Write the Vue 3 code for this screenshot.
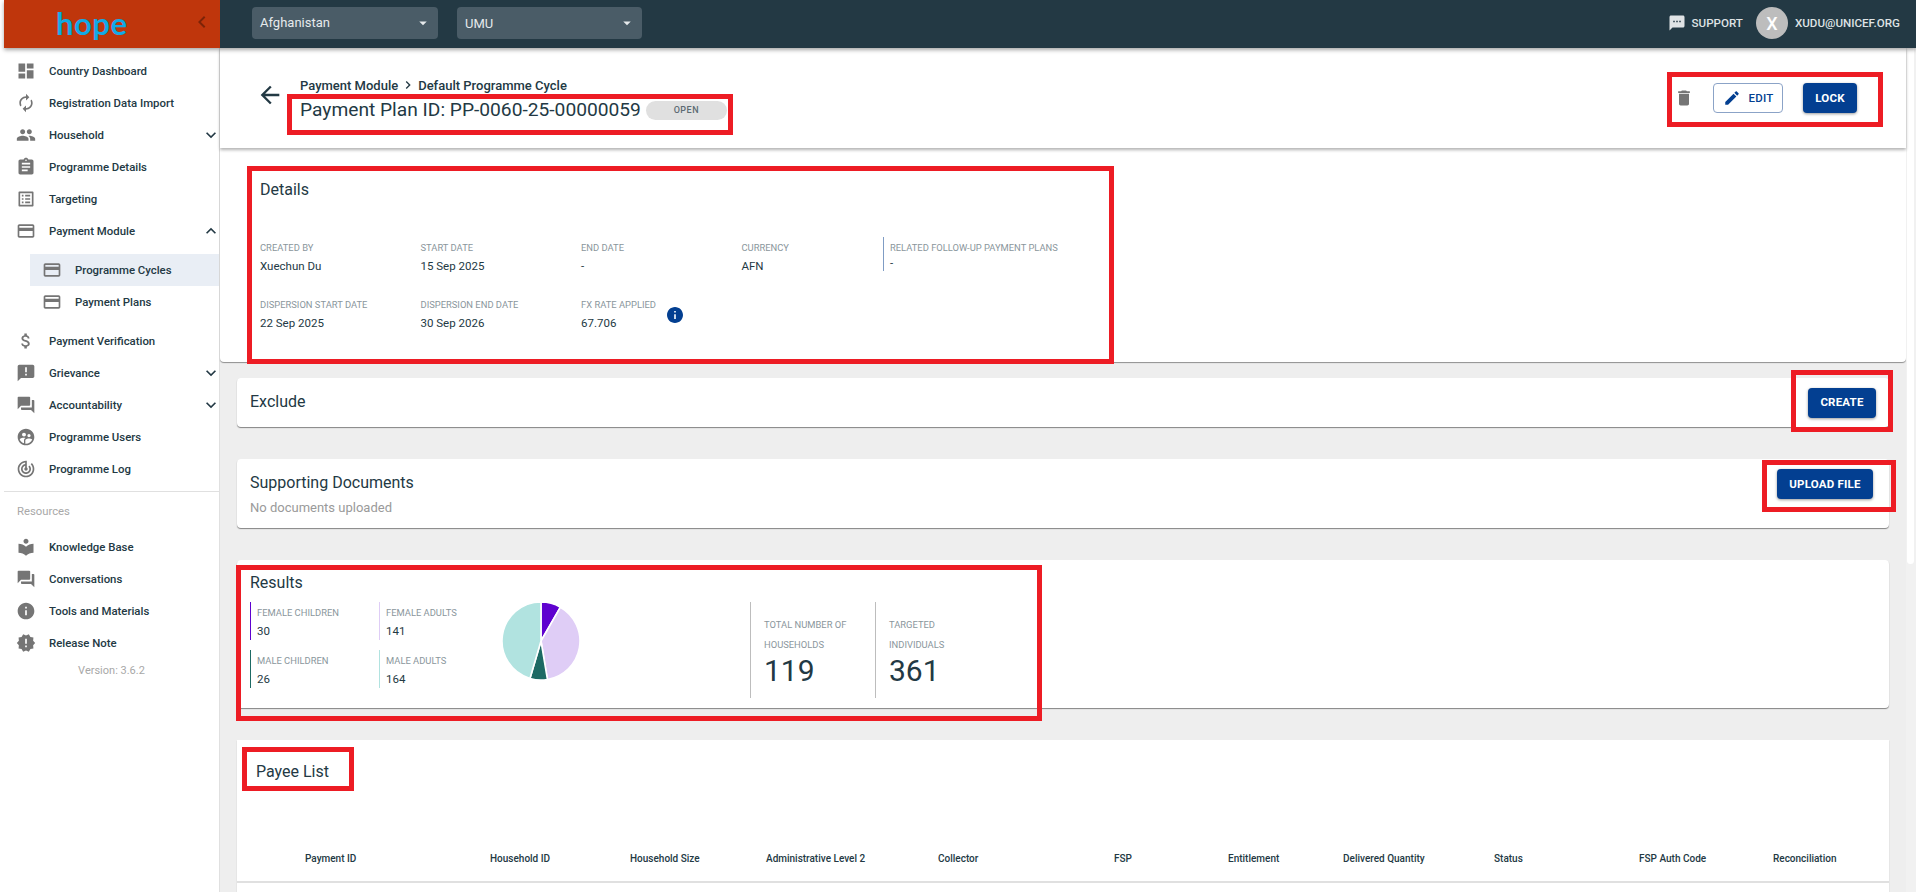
<script setup>
import { computed } from "vue";

const icons = {
  dashboard: "M3 13h8V3H3v10zm0 8h8v-6H3v6zm10 0h8V11h-8v10zm0-18v6h8V3h-8z",
  renew: "M12 6v3l4-4-4-4v3c-4.42 0-8 3.58-8 8 0 1.57.46 3.03 1.24 4.26L6.7 14.8c-.45-.83-.7-1.79-.7-2.8 0-3.31 2.69-6 6-6zm6.76 1.74L17.3 9.2c.44.84.7 1.79.7 2.8 0 3.31-2.69 6-6 6v-3l-4 4 4 4v-3c4.42 0 8-3.58 8-8 0-1.57-.46-3.03-1.24-4.26z",
  people: "M16 11c1.66 0 2.99-1.34 2.99-3S17.66 5 16 5c-1.66 0-3 1.34-3 3s1.34 3 3 3zm-8 0c1.66 0 2.99-1.34 2.99-3S9.66 5 8 5C6.34 5 5 6.34 5 8s1.34 3 3 3zm0 2c-2.33 0-7 1.17-7 3.5V19h14v-2.5c0-2.33-4.67-3.5-7-3.5zm8 0c-.29 0-.62.02-.97.05 1.16.84 1.97 1.97 1.97 3.45V19h6v-2.5c0-2.33-4.67-3.5-7-3.5z",
  assignment: "M19 3h-4.18C14.4 1.84 13.3 1 12 1c-1.3 0-2.4.84-2.82 2H5c-1.1 0-2 .9-2 2v14c0 1.1.9 2 2 2h14c1.1 0 2-.9 2-2V5c0-1.1-.9-2-2-2zm-7 0c.55 0 1 .45 1 1s-.45 1-1 1-1-.45-1-1 .45-1 1-1zm2 14H7v-2h7v2zm3-4H7v-2h10v2zm0-4H7V7h10v2z",
  listAlt: "M19 5v14H5V5h14m1.1-2H3.9c-.5 0-.9.4-.9.9v16.2c0 .4.4.9.9.9h16.2c.4 0 .9-.5.9-.9V3.9c0-.5-.5-.9-.9-.9zM11 7h6v2h-6V7zm0 4h6v2h-6v-2zm0 4h6v2h-6zM7 7h2v2H7zm0 4h2v2H7zm0 4h2v2H7z",
  card: "M20 4H4c-1.11 0-1.99.89-1.99 2L2 18c0 1.11.89 2 2 2h16c1.11 0 2-.89 2-2V6c0-1.11-.89-2-2-2zm0 14H4v-6h16v6zm0-10H4V6h16v2z",
  money: "M11.8 10.9c-2.27-.59-3-1.2-3-2.15 0-1.09 1.01-1.85 2.7-1.85 1.78 0 2.44.85 2.5 2.1h2.21c-.07-1.72-1.12-3.3-3.21-3.81V3h-3v2.16c-1.94.42-3.5 1.68-3.5 3.61 0 2.31 1.91 3.46 4.7 4.13 2.5.6 3 1.48 3 2.41 0 .69-.49 1.79-2.7 1.79-2.06 0-2.87-.92-2.98-2.1h-2.2c.12 2.19 1.76 3.42 3.68 3.83V21h3v-2.15c1.95-.37 3.5-1.5 3.5-3.55 0-2.84-2.43-3.81-4.7-4.4z",
  announcement: "M20 2H4c-1.1 0-1.99.9-1.99 2L2 22l4-4h14c1.1 0 2-.9 2-2V4c0-1.1-.9-2-2-2zm-7 9h-2V5h2v6zm0 4h-2v-2h2v2z",
  forum: "M21 6h-2v9H6v2c0 .55.45 1 1 1h11l4 4V7c0-.55-.45-1-1-1zm-4 6V3c0-.55-.45-1-1-1H3c-.55 0-1 .45-1 1v14l4-4h10c.55 0 1-.45 1-1z",
  users: "M11.99 2c-5.52 0-10 4.48-10 10s4.48 10 10 10 10-4.48 10-10-4.48-10-10-10zm3.61 6.34c1.07 0 1.93.86 1.93 1.93 0 1.07-.86 1.93-1.93 1.93-1.07 0-1.93-.86-1.93-1.93-.01-1.07.86-1.93 1.93-1.93zm-6-1.58c1.3 0 2.36 1.06 2.36 2.36 0 1.3-1.06 2.36-2.36 2.36s-2.36-1.06-2.36-2.36c0-1.31 1.05-2.36 2.36-2.36zm0 9.13v3.75c-2.4-.75-4.3-2.6-5.14-4.96 1.05-1.12 3.67-1.69 5.14-1.69.53 0 1.2.08 1.9.22-1.64.87-1.9 2.02-1.9 2.68zM11.99 20c-.27 0-.53-.01-.79-.04v-4.07c0-1.42 2.94-2.13 4.4-2.13 1.07 0 2.92.39 3.84 1.15-1.17 2.97-4.06 5.09-7.45 5.09z",
  track: "M19.07 4.93l-1.41 1.41C19.1 7.79 20 9.79 20 12c0 4.42-3.58 8-8 8s-8-3.58-8-8c0-4.08 3.05-7.44 7-7.93v2.02C8.16 6.57 6 9.03 6 12c0 3.31 2.69 6 6 6s6-2.69 6-6c0-1.66-.67-3.16-1.76-4.24l-1.41 1.41C15.55 9.9 16 10.9 16 12c0 2.21-1.79 4-4 4s-4-1.79-4-4c0-1.86 1.28-3.41 3-3.86v2.14c-.6.35-1 .98-1 1.72 0 1.1.9 2 2 2s2-.9 2-2c0-.74-.4-1.38-1-1.72V2h-1C6.48 2 2 6.48 2 12s4.48 10 10 10 10-4.48 10-10c0-2.76-1.12-5.26-2.93-7.07z",
  library: "M12 11.55C9.64 9.35 6.48 8 3 8v11c3.48 0 6.64 1.35 9 3.55 2.36-2.19 5.52-3.55 9-3.55V8c-3.48 0-6.64 1.35-9 3.55zM12 8c1.66 0 3-1.34 3-3s-1.34-3-3-3-3 1.34-3 3 1.34 3 3 3z",
  info: "M12 2C6.48 2 2 6.48 2 12s4.48 10 10 10 10-4.48 10-10S17.52 2 12 2zm1 15h-2v-6h2v6zm0-8h-2V7h2v2z",
  release: "M23 12l-2.44-2.78.34-3.68-3.61-.82-1.89-3.18L12 3 8.6 1.54 6.71 4.72l-3.61.81.34 3.68L1 12l2.44 2.78-.34 3.69 3.61.82 1.89 3.18L12 21l3.4 1.46 1.89-3.18 3.61-.82-.34-3.68L23 12zm-10 5h-2v-2h2v2zm0-4h-2V7h2v6z",
  more: "M16.59 8.59L12 13.17 7.41 8.59 6 10l6 6 6-6z",
  less: "M12 8l-6 6 1.41 1.41L12 10.83l4.59 4.58L18 14z",
  left: "M15.41 7.41L14 6l-6 6 6 6 1.41-1.41L10.83 12z",
  right: "M10 6L8.59 7.41 13.17 12l-4.58 4.59L10 18l6-6z",
  back: "M20 11H7.83l5.59-5.59L12 4l-8 8 8 8 1.41-1.41L7.83 13H20v-2z",
  trash: "M6 19c0 1.1.9 2 2 2h8c1.1 0 2-.9 2-2V7H6v12zM19 4h-3.5l-1-1h-5l-1 1H5v2h14V4z",
  edit: "M3 17.25V21h3.75L17.81 9.94l-3.75-3.75L3 17.25zM20.71 7.04c.39-.39.39-1.02 0-1.41l-2.34-2.34c-.39-.39-1.02-.39-1.41 0l-1.83 1.83 3.75 3.75 1.83-1.83z",
  sms: "M20 2H4c-1.1 0-1.99.9-1.99 2L2 22l4-4h14c1.1 0 2-.9 2-2V4c0-1.1-.9-2-2-2zM9 11H7V9h2v2zm4 0h-2V9h2v2zm4 0h-2V9h2v2z",
  drop: "M7 10l5 5 5-5z"
};

const menu = [
  { name: "Country Dashboard", icon: "dashboard" },
  { name: "Registration Data Import", icon: "renew" },
  { name: "Household", icon: "people", arrow: "more" },
  { name: "Programme Details", icon: "assignment" },
  { name: "Targeting", icon: "listAlt" },
  { name: "Payment Module", icon: "card", arrow: "less" }
];
const subMenu = [
  { name: "Programme Cycles", icon: "card", active: true },
  { name: "Payment Plans", icon: "card" }
];
const menu2 = [
  { name: "Payment Verification", icon: "money" },
  { name: "Grievance", icon: "announcement", arrow: "more" },
  { name: "Accountability", icon: "forum", arrow: "more" },
  { name: "Programme Users", icon: "users" },
  { name: "Programme Log", icon: "track" }
];
const resources = [
  { name: "Knowledge Base", icon: "library" },
  { name: "Conversations", icon: "forum" },
  { name: "Tools and Materials", icon: "info" },
  { name: "Release Note", icon: "release" }
];

const details = [
  { label: "Created by", value: "Xuechun Du" },
  { label: "Start date", value: "15 Sep 2025" },
  { label: "End date", value: "-" },
  { label: "Currency", value: "AFN" }
];
const details2 = [
  { label: "Dispersion start date", value: "22 Sep 2025" },
  { label: "Dispersion end date", value: "30 Sep 2026" }
];

const results = [
  { label: "Female children", value: 30, color: "#5f02cf" },
  { label: "Female adults", value: 141, color: "#dfcdf6" },
  { label: "Male children", value: 26, color: "#1d6a64" },
  { label: "Male adults", value: 164, color: "#b1e3e0" }
];

// order round the pie is the same as the results list
const slices = computed(() => {
  const total = results.reduce((sum, r) => sum + r.value, 0);
  let angle = -Math.PI / 2;
  return results.map((r) => {
    const next = angle + (r.value / total) * Math.PI * 2;
    const big = next - angle > Math.PI ? 1 : 0;
    const x1 = 40 + 39 * Math.cos(angle);
    const y1 = 40 + 39 * Math.sin(angle);
    const x2 = 40 + 39 * Math.cos(next);
    const y2 = 40 + 39 * Math.sin(next);
    angle = next;
    return { color: r.color, d: `M40 40L${x1} ${y1}A39 39 0 ${big} 1 ${x2} ${y2}Z` };
  });
});

const columns = [
  "Payment ID", "Household ID", "Household Size", "Administrative Level 2", "Collector", "FSP",
  "Entitlement", "Delivered Quantity", "Status", "FSP Auth Code", "Reconciliation"
];

// red review marks drawn over the page
const marks = [
  { x: 287, y: 94, w: 446, h: 41 },
  { x: 1667, y: 72, w: 216, h: 55 },
  { x: 247, y: 166, w: 867, h: 198 },
  { x: 1791, y: 370, w: 102, h: 62 },
  { x: 1762, y: 460, w: 134, h: 52 },
  { x: 236, y: 565, w: 806, h: 156 },
  { x: 242, y: 747, w: 112, h: 44 }
];
</script>

<template>
  <div class="shell">
    <header class="topbar">
      <div class="brand">
        <span class="logo">hope</span>
        <svg class="collapse" viewBox="0 0 24 24"><path :d="icons.left" /></svg>
      </div>
      <div class="select select-first">
        <span>Afghanistan</span>
        <svg viewBox="0 0 24 24"><path :d="icons.drop" /></svg>
      </div>
      <div class="select">
        <span>UMU</span>
        <svg viewBox="0 0 24 24"><path :d="icons.drop" /></svg>
      </div>
      <div class="top-right">
        <svg class="support-icon" viewBox="0 0 24 24"><path :d="icons.sms" /></svg>
        <span class="top-text">SUPPORT</span>
        <span class="avatar">X</span>
        <span class="top-text">XUDU@UNICEF.ORG</span>
      </div>
    </header>

    <div class="body">
      <aside class="sidebar">
        <div class="nav-top">
          <div v-for="item in menu" :key="item.name" class="nav-item">
            <svg class="nav-icon" viewBox="0 0 24 24"><path :d="icons[item.icon]" /></svg>
            <span>{{ item.name }}</span>
            <svg v-if="item.arrow" class="nav-arrow" viewBox="0 0 24 24"><path :d="icons[item.arrow]" /></svg>
          </div>
          <div class="sub-menu">
            <div v-for="item in subMenu" :key="item.name" class="nav-item" :class="{ active: item.active }">
              <svg class="nav-icon" viewBox="0 0 24 24"><path :d="icons[item.icon]" /></svg>
              <span>{{ item.name }}</span>
            </div>
          </div>
          <div v-for="item in menu2" :key="item.name" class="nav-item">
            <svg class="nav-icon" viewBox="0 0 24 24"><path :d="icons[item.icon]" /></svg>
            <span>{{ item.name }}</span>
            <svg v-if="item.arrow" class="nav-arrow" viewBox="0 0 24 24"><path :d="icons[item.arrow]" /></svg>
          </div>
        </div>
        <div class="nav-title">Resources</div>
        <div v-for="item in resources" :key="item.name" class="nav-item">
          <svg class="nav-icon" viewBox="0 0 24 24"><path :d="icons[item.icon]" /></svg>
          <span>{{ item.name }}</span>
        </div>
        <div class="version">Version: 3.6.2</div>
      </aside>

      <main class="main">
        <section class="page-head">
          <svg class="back" viewBox="0 0 24 24"><path :d="icons.back" /></svg>
          <div class="head-text">
            <div class="crumbs">
              <span>Payment Module</span>
              <svg viewBox="0 0 24 24"><path :d="icons.right" /></svg>
              <span>Default Programme Cycle</span>
            </div>
            <div class="title-row">
              <h1>Payment Plan ID: PP-0060-25-00000059</h1>
              <span class="chip">OPEN</span>
            </div>
          </div>
          <div class="actions">
            <svg class="trash" viewBox="0 0 24 24"><path :d="icons.trash" /></svg>
            <button class="btn btn-outline">
              <svg viewBox="0 0 24 24"><path :d="icons.edit" /></svg>
              EDIT
            </button>
            <button class="btn btn-solid btn-lock">LOCK</button>
          </div>
        </section>

        <section class="details">
          <h2>Details</h2>
          <div class="details-grid">
            <div v-for="d in details" :key="d.label" class="field">
              <div class="label">{{ d.label }}</div>
              <div class="value">{{ d.value }}</div>
            </div>
            <div class="field field-related">
              <div class="label">Related Follow-Up Payment Plans</div>
              <div class="value">-</div>
            </div>
            <div v-for="d in details2" :key="d.label" class="field">
              <div class="label">{{ d.label }}</div>
              <div class="value">{{ d.value }}</div>
            </div>
            <div class="field-fx">
              <div class="field">
                <div class="label">FX rate applied</div>
                <div class="value">67.706</div>
              </div>
              <svg class="fx-info" viewBox="2 2 20 20"><path :d="icons.info" /></svg>
            </div>
          </div>
        </section>

        <section class="card card-exclude">
          <h2>Exclude</h2>
          <button class="btn btn-solid btn-create">CREATE</button>
        </section>

        <section class="card card-docs">
          <div class="docs-text">
            <h2>Supporting Documents</h2>
            <p>No documents uploaded</p>
          </div>
          <button class="btn btn-solid btn-upload">UPLOAD FILE</button>
        </section>

        <section class="card card-results">
          <h2>Results</h2>
          <div class="results-row">
            <div class="stat-grid">
              <div v-for="r in results" :key="r.label" class="stat" :style="{ borderLeftColor: r.color }">
                <div class="label">{{ r.label }}</div>
                <div class="value">{{ r.value }}</div>
              </div>
            </div>
            <svg class="pie" viewBox="0 0 80 80">
              <path v-for="s in slices" :key="s.color" :d="s.d" :fill="s.color" stroke="#fff" stroke-width="1.6" />
            </svg>
            <div class="big-stat big-first">
              <div class="label big-label">Total number of households</div>
              <div class="big-number">119</div>
            </div>
            <div class="big-stat">
              <div class="label big-label">Targeted individuals</div>
              <div class="big-number">361</div>
            </div>
          </div>
        </section>

        <section class="card-payee">
          <h2>Payee List</h2>
          <div class="table-head">
            <div v-for="c in columns" :key="c">{{ c }}</div>
          </div>
        </section>
      </main>
    </div>

    <div class="scroll-track"><div class="scroll-thumb"></div></div>

    <div
      v-for="(m, i) in marks"
      :key="i"
      class="mark"
      :style="{ left: m.x + 'px', top: m.y + 'px', width: m.w + 'px', height: m.h + 'px' }"
    ></div>
  </div>
</template>

<style>
html,
body {
  margin: 0;
  overflow: hidden;
  background: #fff;
}
</style>

<style scoped>
.shell {
  position: relative;
  width: 1916px;
  height: 892px;
  overflow: hidden;
  padding-left: 4px;
  box-sizing: border-box;
  font-family: Roboto, "Liberation Sans", sans-serif;
  color: #233944;
  background: #fff;
}

h1,
h2,
p {
  margin: 0;
  font-weight: 400;
}

.topbar {
  position: relative;
  z-index: 3;
  display: flex;
  align-items: center;
  height: 48px;
  background: #233944;
  box-shadow: 0 2px 4px rgba(0, 0, 0, 0.35);
}

.brand {
  position: relative;
  display: flex;
  align-items: center;
  width: 216px;
  height: 48px;
  padding: 0 0 3px 52px;
  box-sizing: border-box;
  background: #bf360c;
}

.logo {
  font-family: Lato, sans-serif;
  font-size: 31px;
  font-weight: 700;
  line-height: 40px;
  letter-spacing: 0.5px;
  color: #12a9e6;
}

.collapse {
  position: absolute;
  right: 6px;
  top: 10px;
  width: 24px;
  height: 24px;
  fill: rgba(0, 0, 0, 0.35);
}

.select {
  display: flex;
  align-items: center;
  justify-content: space-between;
  width: 185px;
  height: 32px;
  margin-top: -2px;
  margin-left: 19px;
  padding: 0 6px 0 8px;
  box-sizing: border-box;
  border-radius: 4px;
  background: #4a5c67;
  font-size: 13px;
  color: #e6eaec;
}

.select-first {
  width: 186px;
  margin-left: 32px;
}

.select-first span {
  margin-bottom: 2px;
}

.select svg {
  width: 18px;
  height: 18px;
  fill: #e6eaec;
}

.top-right {
  display: flex;
  align-items: center;
  margin-left: auto;
  margin-top: -2px;
  padding-right: 16px;
}

.support-icon {
  width: 18px;
  height: 18px;
  margin-right: 6px;
  fill: #dfe3e5;
}

.top-text {
  font-size: 11.6px;
  font-weight: 500;
  color: #dfe3e5;
}

.avatar {
  display: flex;
  align-items: center;
  justify-content: center;
  width: 32px;
  height: 32px;
  margin: 0 7px 0 13px;
  border-radius: 50%;
  background: #bdbdbd;
  color: #fff;
  font-size: 18px;
  font-weight: 500;
}

.body {
  display: flex;
  height: 844px;
}

.sidebar {
  flex: none;
  width: 216px;
  padding-top: 7px;
  box-sizing: border-box;
  border-right: 1px solid #e0e0e0;
  background: #fff;
}

.nav-top {
  padding-bottom: 6px;
  border-bottom: 1px solid #e0e0e0;
}

.nav-item {
  display: flex;
  align-items: center;
  height: 32px;
  padding-left: 12px;
  font-size: 11.4px;
  font-weight: 500;
  color: #233944;
}

.nav-item span {
  padding-bottom: 1px;
}

.nav-icon {
  flex: none;
  width: 20px;
  height: 20px;
  margin-right: 13px;
  fill: #757575;
}

.nav-arrow {
  width: 20px;
  height: 20px;
  margin-left: auto;
  margin-right: -2px;
  fill: #233944;
}

.sub-menu {
  padding: 7px 0 7px 26px;
}

.active {
  background: #e9eef5;
}

.nav-title {
  margin: 12px 0 11px 13px;
  font-size: 11.3px;
  line-height: 16px;
  color: #a8a8a8;
}

.version {
  margin-top: 4px;
  font-size: 11px;
  line-height: 16px;
  text-align: center;
  color: #a8a8a8;
}

.main {
  flex: none;
  width: 1686px;
  background: #eee;
}

.page-head {
  position: relative;
  z-index: 2;
  display: flex;
  align-items: flex-start;
  height: 100px;
  padding: 29px 49px 0 36px;
  box-sizing: border-box;
  background: #fff;
  box-shadow: 0 2px 3px rgba(0, 0, 0, 0.3);
}

.back {
  flex: none;
  width: 28px;
  height: 28px;
  margin-top: 4px;
  margin-right: 16px;
  fill: #233944;
}

.crumbs {
  display: flex;
  align-items: center;
  height: 16px;
  font-size: 13px;
  font-weight: 500;
  color: #233944;
}

.crumbs svg {
  width: 16px;
  height: 16px;
  margin: 0 2px;
  fill: #233944;
}

.title-row {
  display: flex;
  align-items: center;
  gap: 7px;
  margin-top: 2px;
}

h1 {
  font-size: 19.2px;
  line-height: 30px;
  color: #233944;
}

.chip {
  width: 81px;
  height: 19px;
  margin-left: -2px;
  border-radius: 10px;
  background: #e0e0e0;
  text-align: center;
  font-size: 9px;
  font-weight: 500;
  line-height: 19px;
  letter-spacing: 0.5px;
  color: #5c6b73;
}

.actions {
  display: flex;
  align-items: center;
  margin-left: auto;
  margin-top: 6px;
}

.trash {
  width: 20px;
  height: 20px;
  margin-right: 19px;
  fill: #757575;
}

.btn {
  display: flex;
  align-items: center;
  justify-content: center;
  height: 30px;
  padding: 0;
  box-sizing: border-box;
  border-radius: 4px;
  font-family: inherit;
  font-size: 11.5px;
  font-weight: 500;
  letter-spacing: 0.2px;
}

.btn-outline {
  width: 70px;
  gap: 8px;
  border: 1px solid #8ba3c7;
  background: #fff;
  color: #033f91;
}

.btn-outline svg {
  width: 18px;
  height: 18px;
  fill: #033f91;
}

.btn-solid {
  border: none;
  background: #033f91;
  color: #fff;
  font-weight: 700;
  box-shadow: 0 1px 3px rgba(0, 0, 0, 0.4);
}

.btn-lock {
  width: 54px;
  margin-left: 20px;
}

.btn-create {
  width: 68px;
  margin-top: 3px;
  padding-bottom: 3px;
}

.btn-upload {
  width: 96px;
  margin-top: 10px;
}

.details {
  height: 214px;
  padding: 31px 0 0 40px;
  box-sizing: border-box;
  border-radius: 0 0 4px 4px;
  background: #fff;
  box-shadow: 0 1px 1px rgba(0, 0, 0, 0.4);
}

h2 {
  font-size: 16px;
  line-height: 22px;
  color: #233944;
}

.details-grid {
  display: grid;
  grid-template-columns: 160.5px 160.5px 160.5px 141.5px auto;
  grid-auto-rows: 36px;
  row-gap: 21px;
  margin-top: 39px;
  width: 860px;
}

.label {
  font-size: 9.4px;
  line-height: 16px;
  text-transform: uppercase;
  color: #8a969c;
}

.value {
  font-size: 11.5px;
  line-height: 20px;
  color: #233944;
}

.field-related {
  height: 34px;
  margin-top: -3px;
  padding: 3px 0 0 6px;
  box-sizing: border-box;
  border-left: 1px solid #7f9cc4;
}

.field-related .value {
  line-height: 14px;
}

.field-fx {
  display: flex;
  align-items: center;
  gap: 11px;
}

.fx-info {
  width: 16px;
  height: 16px;
  fill: #033f91;
}

.card {
  display: flex;
  margin: 0 17px;
  padding-left: 13px;
  box-sizing: border-box;
  border-radius: 4px;
  background: #fff;
  box-shadow: 0 1px 1px rgba(0, 0, 0, 0.45);
}

.card-exclude {
  align-items: center;
  justify-content: space-between;
  height: 49px;
  margin-top: 16px;
  padding-right: 13px;
  padding-bottom: 2px;
}

.card-docs {
  align-items: flex-start;
  justify-content: space-between;
  height: 69px;
  margin-top: 32px;
  padding-right: 16px;
}

.docs-text {
  padding-top: 13px;
}

.docs-text p {
  margin-top: 4px;
  font-size: 13px;
  line-height: 20px;
  color: #9a9a9a;
}

.card-results {
  display: block;
  height: 148px;
  margin-top: 32px;
  padding-top: 12px;
}

.results-row {
  display: flex;
  margin-top: 8px;
}

.stat-grid {
  display: grid;
  grid-template-columns: 129px 124px;
  grid-auto-rows: 38px;
  row-gap: 10px;
  align-self: flex-start;
}

.stat {
  padding: 3px 0 0 6px;
  box-sizing: border-box;
  border-left: 1px solid;
}

.pie {
  flex: none;
  width: 80px;
  height: 80px;
  margin: -1px 169px 0 -2px;
}

.big-stat {
  width: 125px;
  height: 96px;
  padding: 13px 0 0 13px;
  box-sizing: border-box;
  border-left: 1px solid #bdbdbd;
}

.big-label {
  width: 90px;
  line-height: 20px;
}

.big-number {
  font-size: 30px;
  line-height: 31px;
  color: #233944;
}

.card-payee {
  height: 200px;
  margin: 32px 17px 0;
  padding-top: 21px;
  box-sizing: border-box;
  background: #fff;
  box-shadow: 0 1px 1px rgba(0, 0, 0, 0.2);
}

.card-payee h2 {
  padding-left: 19px;
}

.table-head {
  display: grid;
  grid-template-columns: 185px 140px 136px 172px 176px 114px 115px 151px 145px 134px 1fr;
  margin-top: 65px;
  padding: 0 0 11px 68px;
  border-bottom: 2px solid #e0e0e0;
  font-size: 10px;
  font-weight: 500;
  line-height: 22px;
  color: #233944;
}

.scroll-track {
  position: absolute;
  right: 0;
  top: 48px;
  width: 10px;
  height: 844px;
  background: #f1f1f1;
}

.scroll-thumb {
  width: 7px;
  height: 516px;
  margin-left: 1px;
  border-radius: 0 0 4px 4px;
  background: #fff;
}

.mark {
  position: absolute;
  z-index: 5;
  box-sizing: border-box;
  border: 5px solid #ed1c24;
}
</style>
